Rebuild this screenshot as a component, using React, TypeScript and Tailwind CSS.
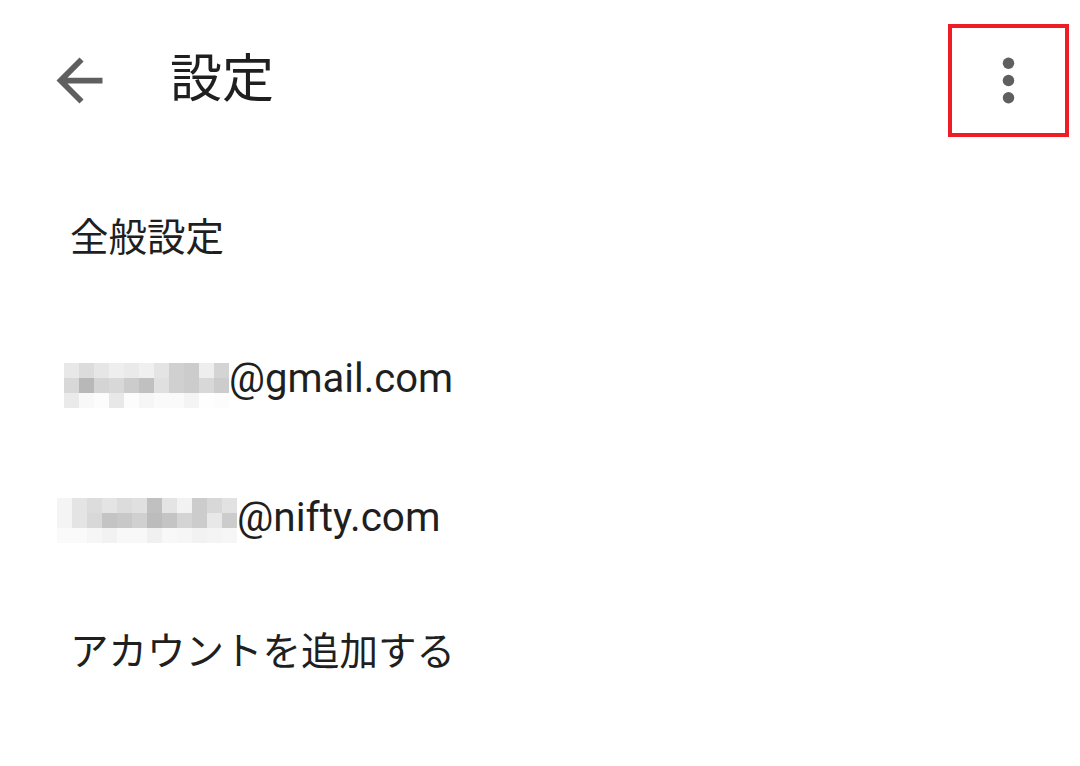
import React from 'react';

const gmailBlocks = [
  ['#e8e8e8', '#dcdcdc', '#e6e6e6', '#eeeeee', '#eaeaea', '#f0f0f0', '#e4e4e4', '#d0d0d0', '#cccccc', '#eeeeee', '#d4d4d4'],
  ['#d8d8d8', '#b8b8b8', '#d4d4d4', '#d8d8d8', '#cccccc', '#c0c0c0', '#e0e0e0', '#d0d0d0', '#cccccc', '#d8d8d8', '#cccccc'],
  ['#eaeaea', '#f8f8f8', '#fcfcfc', '#e8e8e8', '#fcfcfc', '#f6f6f6', '#fafafa', '#fafafa', '#f4f4f4', '#fefefe', '#fcfcfc'],
];

const niftyBlocks = [
  ['#f4f4f4', '#e4e4e4', '#dcdcdc', '#e4e4e4', '#dcdcdc', '#e0e0e0', '#c0c0c0', '#e4e4e4', '#f2f2f2', '#cccccc', '#d8d8d8', '#e2e2e2'],
  ['#f4f4f4', '#e4e4e4', '#d8d8d8', '#c4c4c4', '#c8c8c8', '#d0d0d0', '#bcbcbc', '#c4c4c4', '#d4d4d4', '#cccccc', '#e8e8e8', '#cccccc'],
  ['#fafafa', '#fafafa', '#f6f6f6', '#f2f2f2', '#f8f8f8', '#f8f8f8', '#f0f0f0', '#f8f8f8', '#f6f6f6', '#f2f2f2', '#f4f4f4', '#f6f6f6'],
];

// pixelated mosaic hiding the local part of the address
const Mosaic = ({ rows, className }: { rows: string[][]; className?: string }) => (
  <svg width={rows[0].length * 15} height={45} className={`shrink-0 ${className ?? ''}`}>
    {rows.map((row, y) =>
      row.map((c, x) => <rect key={`${x}-${y}`} x={x * 15} y={y * 15} width={15} height={15} fill={c} />)
    )}
  </svg>
);

const jp = "font-['Roboto','Noto_Sans_CJK_JP',sans-serif]";

export default function App() {
  return (
    <div className={`w-[1080px] h-[766px] bg-white text-[#1f1f1f] ${jp}`}>
      {/* Header */}
      <div className="h-[160px] flex items-center justify-between pl-[45px] pr-[11px]">
        <div className="flex items-center">
          <svg width="69" height="69" viewBox="0 0 24 24" fill="#5f5f5f">
            <path d="M20 11H7.83l5.59-5.59L12 4l-8 8 8 8 1.41-1.41L7.83 13H20v-2z" />
          </svg>
          <h1 className="ml-[56px] text-[52px] leading-none font-normal">設定</h1>
        </div>
        <button className="w-[121px] h-[113px] border-[4px] border-[#ee1c25] flex items-center justify-center">
          <svg width="69" height="69" viewBox="0 0 24 24" fill="#5f5f5f">
            <circle cx="12" cy="6" r="2" />
            <circle cx="12" cy="12" r="2" />
            <circle cx="12" cy="18" r="2" />
          </svg>
        </button>
      </div>

      {/* List */}
      <div className="pt-[9px] flex flex-col">
        <div className="h-[138px] flex items-center pl-[70px] text-[38.5px]">全般設定</div>
        <div className="h-[138px] flex items-center pl-[64px] pt-[6px] text-[40px]">
          <Mosaic rows={gmailBlocks} className="mt-[12px]" />
          <span>@gmail.com</span>
        </div>
        <div className="h-[138px] flex items-center pl-[57px] pt-[6px] text-[40.5px]">
          <Mosaic rows={niftyBlocks} className="mt-[6px]" />
          <span>@nifty.com</span>
        </div>
        <div className="h-[138px] flex items-center pl-[70px] text-[38.5px]">アカウントを追加する</div>
      </div>
    </div>
  );
}
